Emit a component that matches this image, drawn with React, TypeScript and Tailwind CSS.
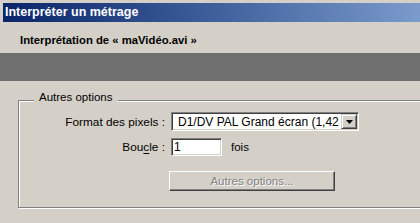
import React from 'react'

const sunken =
  'border border-t-[#808080] border-l-[#808080] border-r-white border-b-white shadow-[inset_1px_1px_0_#404040,inset_-1px_-1px_0_#d4d0c8]'

export default function App() {
  return (
    <div className="w-[420px] h-[223px] overflow-hidden bg-[#d4d0c8] flex flex-col font-['Liberation_Sans',Arial,sans-serif] text-black">
      {/* title bar */}
      <div className="mt-[3px] ml-[3px] h-[19px] shrink-0 flex items-center pl-[2px] bg-gradient-to-r from-[#0a246a] to-[#7b9bcc] text-white font-bold text-[12.5px]">
        Interpréter un métrage
      </div>

      {/* header */}
      <div className="h-[31px] shrink-0 pt-[11px] pl-[20px] font-bold text-[11.3px] leading-[14px]">
        Interprétation de « maVidéo.avi »
      </div>

      {/* dark band */}
      <div className="h-[28px] shrink-0 bg-[#6f6f6f]" />

      {/* body */}
      <div className="flex-1 pt-[19px] pl-[18px] text-[11.5px]">
        <div className="w-[420px] h-[108px] border border-[#808080] shadow-[1px_1px_0_#fff,inset_1px_1px_0_#fff]">
          <div className="-mt-[11px] ml-[15px] w-fit px-[5px] bg-[#d4d0c8] leading-[14px]">Autres options</div>

          <div className="mt-[8px] grid grid-cols-[146px_auto] gap-x-[6px] gap-y-[7px] items-center">
            <div className="text-right leading-[14px] text-[11.8px]">Format des pixels :</div>
            <div className={`w-[188px] h-[19px] bg-white flex items-center ${sunken}`}>
              <div className="flex-1 whitespace-nowrap pl-[6px] leading-[14px] text-[12px]">
                D1/DV PAL Grand écran (1,42
              </div>
              <div className="w-[16px] h-[15px] mr-[1px] bg-[#d4d0c8] border border-t-[#d4d0c8] border-l-[#d4d0c8] border-r-[#404040] border-b-[#404040] shadow-[inset_1px_1px_0_#fff,inset_-1px_-1px_0_#808080] flex items-center justify-center">
                <svg width="7" height="4" viewBox="0 0 7 4">
                  <path d="M0 0h7L3.5 4z" fill="#000" />
                </svg>
              </div>
            </div>

            <div className="text-right leading-[14px] text-[11.8px]">
              Bou<span className="underline underline-offset-2">c</span>le :
            </div>
            <div className="flex items-center gap-[9px]">
              <div className={`w-[51px] h-[18px] bg-white pl-[2px] flex items-center leading-[14px] text-[12px] ${sunken}`}>1</div>
              <span className="leading-[14px]">fois</span>
            </div>
          </div>

          <div className="mt-[15px] ml-[150px] w-[166px] h-[20px] flex items-center justify-center border border-t-white border-l-white border-r-[#404040] border-b-[#404040] shadow-[inset_-1px_-1px_0_#808080] text-[#808080] [text-shadow:1px_1px_0_#fff] leading-[14px]">
            Autres options...
          </div>
        </div>
      </div>
    </div>
  )
}
